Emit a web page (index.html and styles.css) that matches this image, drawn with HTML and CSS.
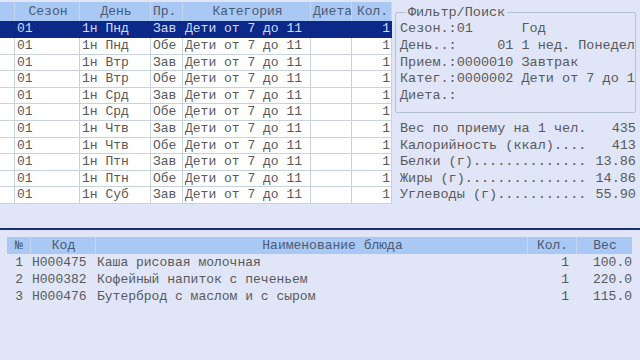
FILE: index.html
```html
<!DOCTYPE html>
<html lang="ru">
<head>
    <meta charset="UTF-8">
    <title>Меню</title>
    <link rel="stylesheet" href="styles.css">
</head>
<body>

    <!-- Upper part: menu grid and filter panel -->
    <div class="top">
        <div class="grid">
            <div class="grid-row grid-head">
                <div class="cell"></div>
                <div class="cell">Сезон</div>
                <div class="cell">День</div>
                <div class="cell left">Пр.</div>
                <div class="cell">Категория</div>
                <div class="cell">Диета</div>
                <div class="cell">Кол.</div>
            </div>
            <div class="grid-row selected">
                <div class="cell"></div><div class="cell">01</div><div class="cell">1н Пнд</div><div class="cell">Зав</div><div class="cell">Дети от 7 до 11</div><div class="cell"></div><div class="cell num">1</div>
            </div>
            <div class="grid-row">
                <div class="cell"></div><div class="cell">01</div><div class="cell">1н Пнд</div><div class="cell">Обе</div><div class="cell">Дети от 7 до 11</div><div class="cell"></div><div class="cell num">1</div>
            </div>
            <div class="grid-row">
                <div class="cell"></div><div class="cell">01</div><div class="cell">1н Втр</div><div class="cell">Зав</div><div class="cell">Дети от 7 до 11</div><div class="cell"></div><div class="cell num">1</div>
            </div>
            <div class="grid-row">
                <div class="cell"></div><div class="cell">01</div><div class="cell">1н Втр</div><div class="cell">Обе</div><div class="cell">Дети от 7 до 11</div><div class="cell"></div><div class="cell num">1</div>
            </div>
            <div class="grid-row">
                <div class="cell"></div><div class="cell">01</div><div class="cell">1н Срд</div><div class="cell">Зав</div><div class="cell">Дети от 7 до 11</div><div class="cell"></div><div class="cell num">1</div>
            </div>
            <div class="grid-row">
                <div class="cell"></div><div class="cell">01</div><div class="cell">1н Срд</div><div class="cell">Обе</div><div class="cell">Дети от 7 до 11</div><div class="cell"></div><div class="cell num">1</div>
            </div>
            <div class="grid-row">
                <div class="cell"></div><div class="cell">01</div><div class="cell">1н Чтв</div><div class="cell">Зав</div><div class="cell">Дети от 7 до 11</div><div class="cell"></div><div class="cell num">1</div>
            </div>
            <div class="grid-row">
                <div class="cell"></div><div class="cell">01</div><div class="cell">1н Чтв</div><div class="cell">Обе</div><div class="cell">Дети от 7 до 11</div><div class="cell"></div><div class="cell num">1</div>
            </div>
            <div class="grid-row">
                <div class="cell"></div><div class="cell">01</div><div class="cell">1н Птн</div><div class="cell">Зав</div><div class="cell">Дети от 7 до 11</div><div class="cell"></div><div class="cell num">1</div>
            </div>
            <div class="grid-row">
                <div class="cell"></div><div class="cell">01</div><div class="cell">1н Птн</div><div class="cell">Обе</div><div class="cell">Дети от 7 до 11</div><div class="cell"></div><div class="cell num">1</div>
            </div>
            <div class="grid-row">
                <div class="cell"></div><div class="cell">01</div><div class="cell">1н Суб</div><div class="cell">Зав</div><div class="cell">Дети от 7 до 11</div><div class="cell"></div><div class="cell num">1</div>
            </div>
        </div>

        <div class="panel">
            <fieldset class="filter">
                <legend>Фильтр/Поиск</legend>
                <div class="line">Сезон.:01      Год</div>
                <div class="line">День..:     01 1 нед. Понедел</div>
                <div class="line">Прием.:0000010 Завтрак</div>
                <div class="line">Катег.:0000002 Дети от 7 до 1</div>
                <div class="line">Диета.:</div>
            </fieldset>

            <div class="stats">
                <div class="stat"><span>Вес по приему на 1 чел.</span><span>435</span></div>
                <div class="stat"><span>Калорийность (ккал)....</span><span>413</span></div>
                <div class="stat"><span>Белки (г)..............</span><span>13.86</span></div>
                <div class="stat"><span>Жиры (г)...............</span><span>14.86</span></div>
                <div class="stat"><span>Углеводы (г)...........</span><span>55.90</span></div>
            </div>
        </div>
    </div>

    <!-- Lower part: dishes of the selected meal -->
    <div class="dishes">
        <div class="dish-row dish-head">
            <div class="dcell">№</div>
            <div class="dcell">Код</div>
            <div class="dcell name-head">Наименование блюда</div>
            <div class="dcell">Кол.</div>
            <div class="dcell">Вес</div>
        </div>
        <div class="dish-row">
            <div class="dcell num">1</div><div class="dcell">Н000475</div><div class="dcell">Каша рисовая молочная</div><div class="dcell num">1</div><div class="dcell num">100.0</div>
        </div>
        <div class="dish-row">
            <div class="dcell num">2</div><div class="dcell">Н000382</div><div class="dcell">Кофейный напиток с печеньем</div><div class="dcell num">1</div><div class="dcell num">220.0</div>
        </div>
        <div class="dish-row">
            <div class="dcell num">3</div><div class="dcell">Н000476</div><div class="dcell">Бутерброд с маслом и с сыром</div><div class="dcell num">1</div><div class="dcell num">115.0</div>
        </div>
    </div>

</body>
</html>
```

FILE: styles.css
```css
body {
    margin: 0;
    background-color: #e0e6f8;
    font-family: "Liberation Mono", "Courier New", monospace;
    font-size: 13px;
    color: #595959;
    overflow: hidden;
}

/* upper part */
.top {
    display: flex;
    height: 228px;
    border-bottom: 2px solid #1e2d6e;
}
.grid {
    width: 392px;
    padding-top: 2px;
}
.grid-row {
    display: grid;
    grid-template-columns: 15px 65px 71px 32px 128px 41px 40px;
    height: 16.6px;
    background-color: #ffffff;
}
.grid-row .cell {
    box-sizing: border-box;
    border-right: 1px solid #c6d2df;
    border-bottom: 1px solid #c6d2df;
    padding-left: 2px;
    line-height: 16px;
    white-space: nowrap;
    overflow: hidden;
}
.grid-row .cell.num {
    text-align: right;
    padding-right: 1px;
}
.grid-head {
    height: 19.4px;
    background-color: #a9c8f3;
    color: #4a5a74;
}
.grid-head .cell {
    line-height: 19px;
    text-align: center;
    border-right: 1px solid #c4d8f4;
    border-bottom: none;
}
.grid-head .cell.left {
    text-align: left;
}
.selected {
    background-color: #0c2888;
    color: #d4dcf6;
}
.selected .cell {
    border-color: #0c2888;
}

.panel {
    flex: 1;
    font-size: 13.5px;
}
.filter {
    margin: 5px 7px 0 3px;
    padding: 1.4px 0 8px 4px;
    border: 1px solid #b4bfcf;
    border-radius: 2px;
    overflow: hidden;
}
.filter legend {
    margin-left: 6px;
    padding: 0 2px;
    line-height: 15px;
}
.line {
    height: 16.6px;
    line-height: 16.6px;
    white-space: pre;
}
.stats {
    margin: 7.6px 7px 0 8px;
}
.stat {
    display: flex;
    justify-content: space-between;
    height: 16.6px;
    line-height: 16.6px;
    white-space: pre;
}

/* lower part */
.dishes {
    margin: 7px 8px 0 7px;
}
.dish-row {
    display: grid;
    grid-template-columns: 24px 65px 432px 49px 55px;
    height: 17px;
    line-height: 17px;
}
.dcell {
    box-sizing: border-box;
    padding-left: 1px;
    white-space: nowrap;
}
.dcell.num {
    text-align: right;
    padding-right: 8px;
}
.dish-row .dcell.num:last-child {
    padding-right: 0;
}
.dish-head {
    background-color: #a9c8f3;
    color: #4a5a74;
}
.dish-head .dcell {
    text-align: center;
    border-right: 1px solid #c4d8f4;
}
.dish-head .dcell:last-child {
    border-right: none;
}
.dish-head .name-head {
    padding-left: 42px;
}
```
